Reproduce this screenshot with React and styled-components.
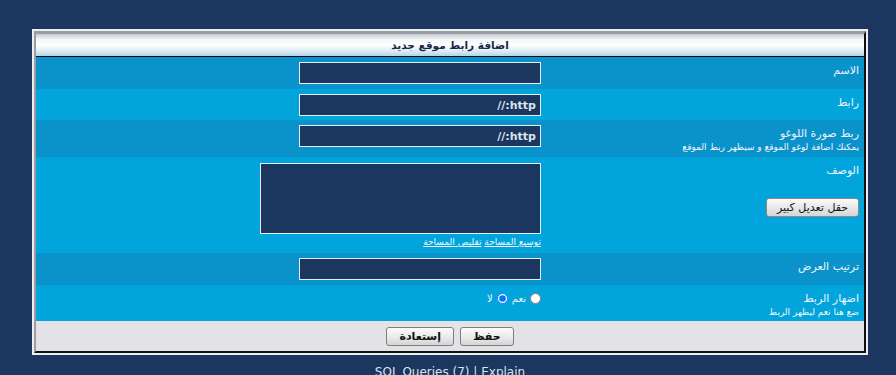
import styled, { createGlobalStyle } from 'styled-components';

const GlobalStyle = createGlobalStyle`
body{
    margin: 0;
    background: #1b365f;
    font-family: "DejaVu Sans", Tahoma, sans-serif;
}
`

const rows = [
    { label: "الاسم", height: 32, tone: "dark", field: "input", value: "" },
    { label: "رابط", height: 31, tone: "light", field: "input", value: "http://" },
    { label: "ربط صورة اللوغو", hint: "يمكنك اضافة لوغو الموقع و سيظهر ربط الموقع", height: 37, tone: "dark", field: "input", value: "http://" },
    { label: "الوصف", height: 96, tone: "light", field: "textarea" },
    { label: "ترتيب العرض", height: 32, tone: "dark", field: "input", value: "" },
    { label: "اضهار الربط", hint: "ضع هنا نعم ليظهر الربط", height: 36, tone: "light", field: "radio" },
]

export default function App(){
    return(
        <>
        <GlobalStyle/>
        <Page>
            <Frame>
                <Inner dir="rtl">
                    <Header>اضافة رابط موقع جديد</Header>
                    {rows.map((r) => (
                        <Row key={r.label} height={r.height} tone={r.tone}>
                            <LabelCell>
                                <Label>{r.label}</Label>
                                {r.hint && <Hint>{r.hint}</Hint>}
                                {r.field === "textarea" && <SmallButton>حقل تعديل كبير</SmallButton>}
                            </LabelCell>
                            <ValueCell>
                                {r.field === "input" && <Field dir="rtl" defaultValue={r.value}/>}
                                {r.field === "textarea" && (
                                    <>
                                    <Area/>
                                    <Links>
                                        <a href="#">توسيع المساحة</a> <a href="#">تقليص المساحة</a>
                                    </Links>
                                    </>
                                )}
                                {r.field === "radio" && (
                                    <Radios>
                                        <RadioLabel><input type="radio" name="show"/> نعم</RadioLabel>
                                        <RadioLabel><input type="radio" name="show" defaultChecked/> لا</RadioLabel>
                                    </Radios>
                                )}
                            </ValueCell>
                        </Row>
                    ))}
                    <Footer>
                        <Button>حفظ</Button>
                        <Button>إستعادة</Button>
                    </Footer>
                </Inner>
            </Frame>
            <Queries>SQL Queries (7) | Explain</Queries>
        </Page>
        </>
    )
}

const Page = styled.div`
padding-top: 29px;
padding-left: 32px;
`
const Frame = styled.div`
width: 832px;
border: 2px solid #eeeeee;
`
const Inner = styled.div`
direction: rtl;
border-top: 3px solid #9c9ca4;
border-left: 2px solid #9c9ca4;
border-right: 2px solid #111;
border-bottom: 2px solid #111;
`
const Header = styled.div`
height: 22px;
line-height: 22px;
text-align: center;
font-weight: bold;
font-size: 10.5px;
color: #1a2848;
background: linear-gradient(#c4c9d2 0%, #f4f6f8 25%, #ffffff 50%, #dbe9f3 80%, #b5d4e8 100%);
border-bottom: 1px solid #0a0a14;
`
const Row = styled.div`
display: flex;
height: ${p => p.height}px;
background: ${p => p.tone === "dark" ? "#0a93cb" : "#02a4dc"};
`
const LabelCell = styled.div`
width: 311px;
padding: 6px 5px 0 0;
display: flex;
flex-direction: column;
align-items: flex-start;
`
const Label = styled.div`
font-size: 11px;
line-height: 15px;
color: #eef4fa;
`
const Hint = styled.div`
font-size: 9px;
line-height: 12px;
color: #f4f8fc;
`
const SmallButton = styled.button`
margin-top: 20px;
height: 19px;
width: 93px;
padding: 0;
font-family: "DejaVu Sans", Tahoma, sans-serif;
font-size: 11px;
color: #111;
background: linear-gradient(#fcfcfc, #e4e4e4 60%, #d6d6d6);
border: 1px solid #8a8a8a;
border-radius: 3px;
`
const ValueCell = styled.div`
flex: 1;
padding: 5px 7px 0 0;
display: flex;
flex-direction: column;
align-items: flex-start;
`
const Field = styled.input`
box-sizing: border-box;
width: 242px;
height: 22px;
padding: 0 4px;
direction: rtl;
background: #1b365f;
border: 1px solid #e6eef4;
color: #dde4ec;
font-family: "DejaVu Sans", Tahoma, sans-serif;
font-weight: bold;
font-size: 11px;
outline: none;
`
const Area = styled.textarea`
box-sizing: border-box;
margin-top: 1px;
width: 281px;
height: 71px;
background: #1b365f;
border: 1px solid #e6eef4;
resize: none;
outline: none;
`
const Links = styled.div`
margin-top: 2px;
font-size: 9px;
line-height: 13px;
a{
    color: #f4f8fc;
}
`
const Radios = styled.div`
display: flex;
gap: 4px;
margin-top: 3px;
`
const RadioLabel = styled.label`
display: flex;
align-items: center;
font-size: 10px;
color: #eef4fa;
input{
    width: 11px;
    height: 11px;
    margin: 0 0 0 4px;
}
`
const Footer = styled.div`
height: 30px;
display: flex;
justify-content: center;
align-items: center;
gap: 6px;
background: #e3e3e7;
`
const Button = styled.button`
height: 19px;
padding: 0 12px;
min-width: 53px;
font-family: "DejaVu Sans", Tahoma, sans-serif;
font-weight: bold;
font-size: 11px;
color: #111;
background: linear-gradient(#fcfcfc, #e8e8e8 60%, #d4d4d4);
border: 1px solid #7e7e7e;
border-radius: 3px;
`
const Queries = styled.div`
width: 836px;
margin-top: 10px;
text-align: center;
font-size: 12px;
color: #dce4ee;
`
